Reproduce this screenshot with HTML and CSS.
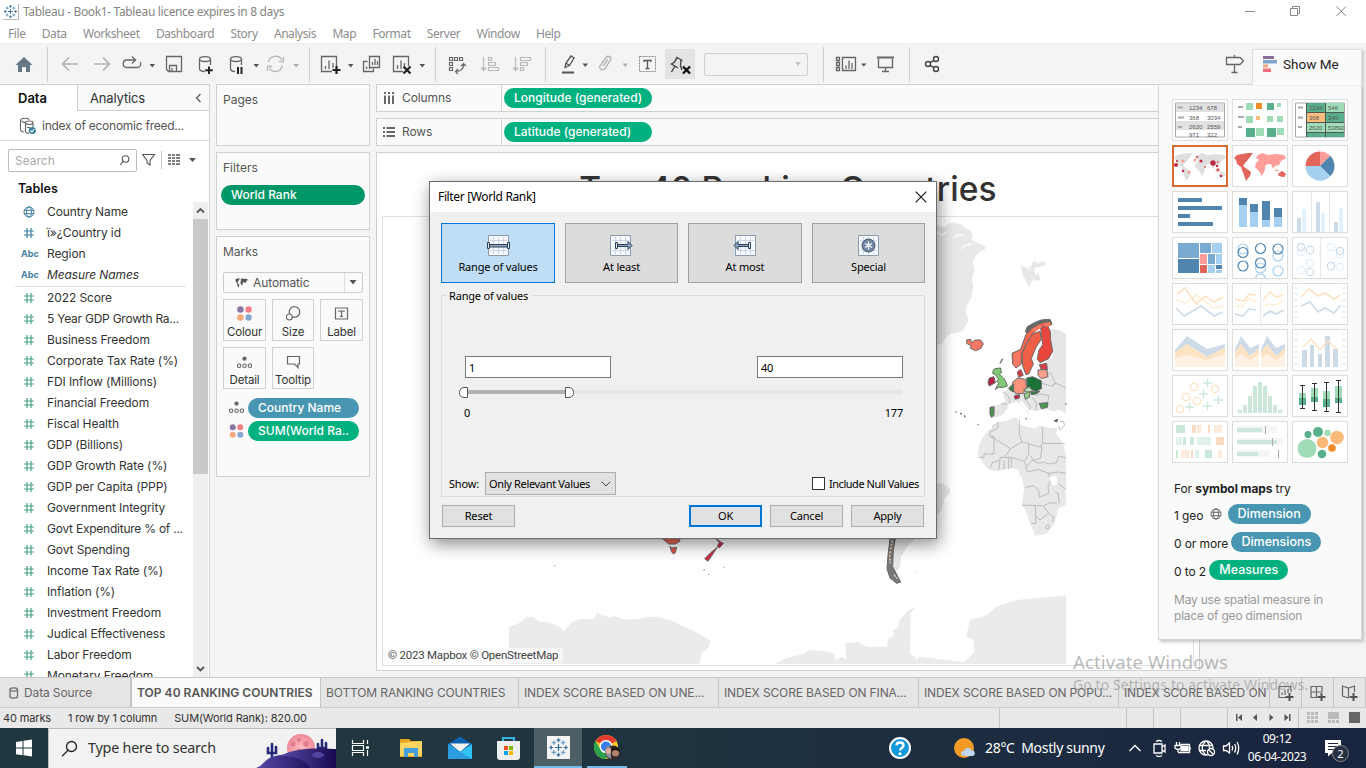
FILE: index.html
```html
<!DOCTYPE html>
<html lang="en">
<head>
<meta charset="utf-8">
<title>Tableau - Book1</title>
<link rel="stylesheet" href="styles.css">
</head>
<body>
<svg class="defs" width="0" height="0">
  <symbol id="hash" viewBox="0 0 12 12"><path d="M1 4H11M1 8H11M4 1V11M8 1V11" fill="none" stroke="currentColor" stroke-width="1.2"/></symbol>
  <symbol id="globe" viewBox="0 0 12 12"><g fill="none" stroke="currentColor"><circle cx="6" cy="6" r="5"/><ellipse cx="6" cy="6" rx="2.4" ry="5"/><path d="M1 4.3H11M1 7.7H11"/></g></symbol>
  <symbol id="dots" viewBox="0 0 14 14"><circle cx="3.2" cy="3.2" r="3" fill="#8a76a0"/><circle cx="10.8" cy="3.2" r="3" fill="#f77c89"/><circle cx="3.2" cy="10.8" r="3" fill="#f3a97c"/><circle cx="10.8" cy="10.8" r="3" fill="#86a8d2"/></symbol>
  <symbol id="detail" viewBox="0 0 14 12"><circle cx="7" cy="2.4" r="2" fill="#666"/><g fill="none" stroke="#666"><circle cx="2" cy="9" r="1.6"/><circle cx="7" cy="9" r="1.6"/><circle cx="12" cy="9" r="1.6"/></g></symbol>
  <symbol id="tableau" viewBox="0 0 24 24"><g fill="none" stroke-linecap="butt"><path d="M12 8V16M8 12H16M12 1.500V6M9.800 3.700H14.200M12 18V22.500M9.800 20.300H14.200M1.500 12H6M3.700 9.800V14.200M18 12H22.500M20.300 9.800V14.200" stroke="#336f9c" stroke-width="1.400"/><path d="M6.700 4V9M4.200 6.500H9.200M17.300 4V9M14.800 6.500H19.800M6.700 15V20M4.200 17.500H9.200M17.300 15V20M14.800 17.500H19.800" stroke="#6fa3c8" stroke-width="1.600"/></g></symbol>
  <symbol id="amer" viewBox="0 0 54 30"><path d="M1 6L4 3 9 2 15 1 20 1 17 5 14 9 12 11 10 14 14 17 18 20 17 24 13 29 11 23 9 18 8 15 4 12 3 8Z"/></symbol>
  <symbol id="rest" viewBox="0 0 54 30"><path d="M23 6L25 3 29 1 35 3 43 2 51 3 53 6 48 9 46 13 42 14 40 17 38 12 35 12 32 14 32 18 29 24 26 19 22 15 23 11 26 8Z"/><path d="M45 22L49 19 53 22 51 25 46 24ZM42 17L47 19 42 19Z"/></symbol>
</svg>

<header class="titlebar">
  <svg width="16" height="16" viewBox="0 0 24 24" class="applogo"><use href="#tableau"/></svg>
  <span class="apptitle">Tableau - Book1- Tableau licence expires in 8 days</span>
  <svg class="winbtns" width="126" height="22" viewBox="1240 0 126 22" fill="none" stroke="#888"><path d="M1245 10.500H1255M1290.500 7.500H1297.500V14.500H1290.500ZM1292.500 7V5.500H1299.500V12.500H1298M1336.500 5.500L1346 15M1346 5.500L1336.500 15"/></svg>
</header>
<nav class="menubar"><span>File</span><span>Data</span><span>Worksheet</span><span>Dashboard</span><span>Story</span><span>Analysis</span><span>Map</span><span>Format</span><span>Server</span><span>Window</span><span>Help</span></nav>

<div class="toolbar">
  <svg width="47" height="40" viewBox="0 44 47 40"><path d="M15.500 65L24 57 32.500 65H30V72H26V67H22V72H18V65Z" fill="#66778a"/></svg>
  <i class="sep"></i>
  <svg width="70" height="40" viewBox="48 44 70 40" fill="none" stroke="#b3b3b3" stroke-width="1.700"><path d="M78 64H63M69 57.500L62.500 64 69 70.500M94 64H109M103 57.500L109.500 64 103 70.500"/></svg>
  <svg width="191" height="40" viewBox="118 44 191 40" fill="none" stroke="#666" stroke-width="1.300"><path d="M135 60H127C122 60 122 67.500 127 67.500H137C141 67.500 141.500 63 140 62M132 56.500L135.500 60 132 63.500M166.500 56.500H181.500V71.500H168.500L166.500 69.500ZM169.500 71V65.500H176.500V71M172 71V68"/>
    <path d="M199.500 59V69C200 71 203 71.500 205 71.500M210.500 59V65M199.500 59C199.500 55.700 210.500 55.700 210.500 59S199.500 62.300 199.500 59ZM230.500 59V69C231 71 233 71.500 235 71.500M241.500 59V65M230.500 59C230.500 55.700 241.500 55.700 241.500 59S230.500 62.300 230.500 59Z"/>
    <path d="M209 66.500V74M205.200 70.200H212.800M238 67V74M241.500 67V74" stroke="#222" stroke-width="2"/>
    <path d="M149.500 64H155L152.250 67.500ZM253.500 64H259L256.250 67.500Z" fill="#555" stroke="none"/><path d="M293.500 64H299L296.250 67.500Z" fill="#aaa" stroke="none"/>
    <path d="M268.500 62C270 55 279 54.500 282 60M282.500 65.500C281 73 272 73 269.500 68M283.500 57V61.500H279M267.500 71V66.500H272" stroke="#b8b8b8"/></svg>
  <i class="sep"></i>
  <svg width="125" height="40" viewBox="310 44 125 40" fill="none" stroke="#666" stroke-width="1.300"><path d="M332 71.500H321.500V56.500H336.500V66M403 71.500H393.500V56.500H408.500V66M325.500 69V66M329 69V60.500M333 68V63M397.500 69V65M401 69V60.500M404.500 66V63M367.500 61.500H363.500V71.500H373.500V68.500M369.500 56.500H379.500V67.500H369.500ZM372.500 65V62M375 65V59M377.500 65V61M366.500 69V66.500M369.500 69V68"/><path d="M336.500 66V74M332.500 70H340.500M403.500 66.500L410.500 73.500M410.500 66.500L403.500 73.500" stroke="#222" stroke-width="2.200"/><path d="M348 64H353.500L350.750 67.500ZM419.500 64H425L422.250 67.500Z" fill="#555" stroke="none"/></svg>
  <i class="sep"></i>
  <svg width="109" height="40" viewBox="436 44 109 40" fill="none" stroke="#666" stroke-width="1.200"><path d="M449.500 57.500H452.500V60.500H449.500ZM454.500 57.500H457.500V60.500H454.500ZM459.500 57.500H462.500V60.500H459.500ZM449.500 62.500H452.500V65.500H449.500ZM449.500 67.500H452.500V70.500H449.500ZM463.500 64C464 69 460 71.500 456 71.500M461 66L463.500 63.500 466 66M458 69L455.500 71.500 458 74"/><path d="M483.500 57V70M481 67.500L483.500 70.500 486 67.500M488.500 57.500H491.500V60.500H488.500ZM488.500 62.500H495.500V65.500H488.500ZM488.500 67.500H498.500V70.500H488.500ZM515.500 57V70M513 67.500L515.500 70.500 518 67.500M520.500 57.500H530.500V60.500H520.500ZM520.500 62.500H527.500V65.500H520.500ZM520.500 67.500H523.500V70.500H520.500Z" stroke="#b8b8b8"/></svg>
  <i class="sep"></i>
  <svg width="119" height="40" viewBox="546 44 119 40" fill="none" stroke="#555" stroke-width="1.300"><path d="M565 67.500L566 63 571 56 574 58 569.500 65.500ZM566 63L569.500 65.500"/><path d="M562 72.500H574" stroke-width="2"/><path d="M602 63L606 57.500C608 55 612 57 610.500 60L605 68.500C603 71 598.500 69 600 66L605.500 58M603 66L608 59.500" stroke="#b0b0b0"/><path d="M582.500 63.500H588L585.250 67Z" fill="#555" stroke="none"/><path d="M622.500 63.500H628L625.250 67Z" fill="#b0b0b0" stroke="none"/><path d="M639.500 56.500H655.500V71.500H639.500Z" stroke="#888" stroke-width="1" stroke-dasharray="2 1"/><path d="M644 62V60.500H651V62M647.500 60.500V68M645.500 68.500H649.500"/></svg>
  <span class="pinned"><svg width="30" height="30" viewBox="665 49 30 30" fill="none" stroke="#444" stroke-width="1.400"><path d="M676 57L682.500 60.500M681 60L680.500 66L682 70M677 58L674 62.500 671.500 64 678 68M675 66L671.500 72"/><path d="M683 66.500L690 73.500M690 66.500L683 73.500" stroke="#111" stroke-width="2.400"/></svg></span>
  <span class="fitbox"><svg width="8" height="5" viewBox="0 0 8 5"><path d="M1 0H7L4 4Z" fill="#c4c4c4"/></svg></span>
  <i class="sep sep-fit"></i>
  <svg width="85" height="40" viewBox="824 44 85 40" fill="none" stroke="#666" stroke-width="1.300"><path d="M836.500 57.500H839.500V60.500H836.500ZM836.500 62.500H839.500V65.500H836.500ZM836.500 67.500H839.500V70.500H836.500ZM842.500 57.500H855.500V70.500H842.500ZM846 69V65.500M849 69V60.500M852 69V63"/><path d="M878.500 58.500V67.500H892.500V58.500M885.500 68V71.500M882 71.500H889"/><path d="M877 57.500H894" stroke-width="2"/><path d="M861 63.500H866.500L863.750 66.500Z" fill="#555" stroke="none"/></svg>
  <i class="sep"></i>
  <svg width="50" height="40" viewBox="910 44 50 40" fill="none" stroke="#444" stroke-width="1.400"><circle cx="928" cy="64" r="2.500"/><circle cx="936" cy="59" r="2.500"/><circle cx="936" cy="69" r="2.500"/><path d="M930.200 62.700L934 60.300M930.200 65.300L934 67.700"/></svg>
  <svg class="sign" width="32" height="40" viewBox="1220 44 32 40" fill="none" stroke="#666" stroke-width="1.300"><path d="M1226.500 57.500H1240L1243.500 61 1240 64.500H1226.500ZM1234.500 55V57M1234.500 65V72.500M1231.500 72.500H1237.500"/></svg>
</div>

<main class="workspace">
  <aside class="data">
    <div class="datatabs"><b class="tab-data">Data</b><span class="tab-an">Analytics<svg width="7" height="10" viewBox="0 0 7 10" fill="none" stroke="#555" stroke-width="1.200"><path d="M5.500 1L1.500 5 5.500 9"/></svg></span></div>
    <div class="source"><svg width="17" height="18" viewBox="19 116 17 18" fill="none" stroke="#666" stroke-width="1.100"><path d="M20.500 119.500C20.500 116.500 29 116.500 29 119M20.500 119.500V129C21 130.500 22 131 24 131M22 119.500C22 121 25 121.500 26 121.500M25.500 121.500C25.500 119.500 33 119.500 33 121.500V126M25.500 121.500V130.500C26 132 27 132.500 29 132.500M25.500 121.500C25.500 124 33 124 33 121.500M27 126.500H30"/><circle cx="32.300" cy="129.500" r="3.600" fill="#3b7f9e" stroke="none"/><path d="M30.500 129.500L32 131 34.300 128" stroke="#fff"/></svg><span>index of economic freed...</span></div>
    <div class="searchrow">
      <div class="search"><span>Search</span><svg width="11" height="11" viewBox="0 0 11 11" fill="none" stroke="#555" stroke-width="1.100"><circle cx="6.500" cy="4" r="3.300"/><path d="M4 6.500L1 10"/></svg></div>
      <svg width="55" height="22" viewBox="142 149 55 22" fill="none" stroke="#555" stroke-width="1.100"><path d="M142.500 154.500H154.500L150 160.500V165L147 163V160.500Z"/><path d="M161.500 151V169" stroke="#ccc"/><path d="M168 155H171M168 158H171M168 161H171M168 164H171M172 155H175M172 158H175M172 161H175M172 164H175M176 155H180M176 158H180M176 161H180M176 164H180" stroke-width="1.300"/><path d="M189 158H196L192.500 162Z" fill="#555" stroke="none"/></svg>
    </div>
    <div class="tables">Tables</div>
    <div class="fieldarea">
      <div class="fields">
        <div class="f blue"><svg><use href="#globe"/></svg>Country Name</div>
        <div class="f blue"><svg><use href="#hash"/></svg>ï»¿Country id</div>
        <div class="f blue"><em>Abc</em>Region</div>
        <div class="f blue"><em>Abc</em><i>Measure Names</i></div>
        <hr>
        <div class="f"><svg><use href="#hash"/></svg>2022 Score</div>
        <div class="f tight"><svg><use href="#hash"/></svg>5 Year GDP Growth Ra...</div>
        <div class="f"><svg><use href="#hash"/></svg>Business Freedom</div>
        <div class="f"><svg><use href="#hash"/></svg>Corporate Tax Rate (%)</div>
        <div class="f"><svg><use href="#hash"/></svg>FDI Inflow (Millions)</div>
        <div class="f"><svg><use href="#hash"/></svg>Financial Freedom</div>
        <div class="f"><svg><use href="#hash"/></svg>Fiscal Health</div>
        <div class="f"><svg><use href="#hash"/></svg>GDP (Billions)</div>
        <div class="f"><svg><use href="#hash"/></svg>GDP Growth Rate (%)</div>
        <div class="f"><svg><use href="#hash"/></svg>GDP per Capita (PPP)</div>
        <div class="f"><svg><use href="#hash"/></svg>Government Integrity</div>
        <div class="f tight"><svg><use href="#hash"/></svg>Govt Expenditure % of ...</div>
        <div class="f"><svg><use href="#hash"/></svg>Govt Spending</div>
        <div class="f"><svg><use href="#hash"/></svg>Income Tax Rate (%)</div>
        <div class="f"><svg><use href="#hash"/></svg>Inflation (%)</div>
        <div class="f"><svg><use href="#hash"/></svg>Investment Freedom</div>
        <div class="f"><svg><use href="#hash"/></svg>Judical Effectiveness</div>
        <div class="f"><svg><use href="#hash"/></svg>Labor Freedom</div>
        <div class="f"><svg><use href="#hash"/></svg>Monetary Freedom</div>
      </div>
      <div class="scroll"><svg width="15" height="17" viewBox="0 0 15 17" fill="none" stroke="#555" stroke-width="1.800"><path d="M4 10.500L7.500 7 11 10.500"/></svg><div class="thumb"></div><svg class="down" width="15" height="17" viewBox="0 0 15 17" fill="none" stroke="#555" stroke-width="1.800"><path d="M4 7L7.500 10.500 11 7"/></svg></div>
    </div>
  </aside>

  <section class="cards">
    <div class="card pages">Pages</div>
    <div class="card filters"><div>Filters</div><span class="pill rank">World Rank</span></div>
    <div class="card marks">
      <div class="cardname">Marks</div>
      <div class="marktype"><svg width="13" height="10" viewBox="0 0 54 30" preserveAspectRatio="none" fill="#555"><path d="M1 6L4 3 9 2 15 1 20 1 17 5 14 9 12 11 10 14 14 17 18 20 17 24 13 29 11 23 9 18 8 15 4 12 3 8ZM23 6L25 3 29 1 35 3 43 2 51 3 53 6 48 9 46 13 42 14 40 17 38 12 35 12 32 14 32 18 29 24 26 19 22 15 23 11 26 8Z"/></svg><span>Automatic</span><b><svg width="8" height="5" viewBox="0 0 8 5"><path d="M.500 0H7.500L4 4.500Z" fill="#555"/></svg></b></div>
      <div class="markgrid">
        <div><svg width="15" height="15" viewBox="0 0 14 14"><use href="#dots"/></svg>Colour</div>
        <div><svg width="15" height="15" viewBox="0 0 15 15" fill="none" stroke="#666" stroke-width="1.200"><circle cx="8.500" cy="6" r="5.300"/><circle cx="3.300" cy="11" r="3" fill="#fafafa"/></svg>Size</div>
        <div><svg width="15" height="15" viewBox="0 0 15 15" fill="none" stroke="#666" stroke-width="1.200"><path d="M1.500 2H13.500V13H1.500ZM5 6V5H10V6M7.500 5V10.500M6 10.500H9"/></svg>Label</div>
        <div><svg width="15" height="15" viewBox="0 -2 14 14"><use href="#detail" width="14" height="12"/></svg>Detail</div>
        <div><svg width="15" height="15" viewBox="0 0 15 15" fill="none" stroke="#666" stroke-width="1.200"><path d="M1.500 2.500H13.500V10H12V13.500L8.500 10H1.500Z"/></svg>Tooltip</div>
      </div>
      <div class="markpill"><svg width="15" height="14" viewBox="0 0 14 13"><use href="#detail" width="14" height="12"/></svg><span class="pill dim">Country Name</span></div>
      <div class="markpill"><svg width="15" height="14" viewBox="0 0 14 14"><use href="#dots"/></svg><span class="pill">SUM(World Ra..</span></div>
    </div>
  </section>

  <section class="viewcol">
    <div class="shelf"><div class="shelfname"><svg width="12" height="12" viewBox="0 0 12 12" stroke="#666" stroke-width="2"><path d="M2 0V2M2 3.500V12M6 0V2M6 3.500V12M10 0V2M10 3.500V12"/></svg>Columns</div><span class="pill">Longitude (generated)</span></div>
    <div class="shelf"><div class="shelfname"><svg width="12" height="12" viewBox="0 0 12 12" stroke="#666" stroke-width="2"><path d="M0 2H2M3.500 2H12M0 6H2M3.500 6H12M0 10H2M3.500 10H12"/></svg>Rows</div><span class="pill">Latitude (generated)</span></div>
    <div class="view">
      <h1>Top 40 Ranking Countries</h1>
      <div class="mapbox">
        <svg width="811" height="448" viewBox="383 217 811 448">
          <g transform="translate(930 210) scale(.33333)" stroke-linejoin="round">
            <path d="M0 50L24 46 40 52 60 38 92 42 108 56 122 62 128 78 126 90 166 110 164 120 150 126 136 140 128 158 134 178 126 204 130 232 124 262 112 284 106 304 116 330 98 364 62 372 44 386 36 402 22 404 0 430ZM272 166L286 172 300 180 298 166 306 170 306 158 314 152 324 160 340 152 350 164 330 172 318 170 312 182 318 196 324 188 332 210 318 212 312 206 302 218 298 234 288 212 278 192ZM20 820H36L60 836 58 852 44 864 38 892 30 908 20 914Z" fill="#e8e8e8"/>
            <path d="M70 84L84 74 100 76M96 118L104 106 126 102M20 66L34 76 48 66" stroke="#fff" stroke-width="4" fill="none"/>
            <path d="M366 356L386 360 408 372V610L388 600 366 604 352 598 330 600 318 604 298 598 300 612 292 608 276 588 262 576 250 578 234 584 232 596 220 612 206 620 188 622 178 610 182 590 202 584 214 582 226 572 216 548 234 540 246 520 340 510 338 488 344 460 370 440 364 410Z" fill="#e6e6e6"/>
            <path d="M206 636L230 632 254 622 264 626 266 644 290 650 314 656 330 646 360 654 380 654 382 672 400 704 408 736V884L386 894 374 938 352 970 316 978 302 944 286 900 276 884 282 836 276 804 266 790 268 780 246 774 228 778 196 784 172 776 154 752 144 736 146 706 162 676 186 652Z" fill="#e8e8e8"/>
            <path d="M204 640V654L180 666V678L242 716 222 744M180 680H192V732H162V742H146M242 716L276 696 268 672V630M276 696L334 712V702M338 652V700H408M296 700V732L284 754 244 742H210V752L188 756 180 774M210 752L206 780M222 752V778M236 744V778M244 742V774M284 754L288 770 304 754 332 744 336 712M300 736L314 756 330 760 340 756 358 762 380 758 386 738 408 744M288 770L292 786 324 778 356 790 362 812 354 830 356 850 328 862 326 840 312 828 286 832M356 790L384 786 408 790M362 812L376 814 408 838M374 846L384 850 388 880M276 886H316L318 940H304M316 886L340 888 360 878 380 880M342 890L356 910 330 930 318 918M356 910L370 920 368 936M346 950L356 944 358 954 350 958ZM230 584L214 580M186 652L206 636M288 570L302 590 298 602M318 558L330 552 356 556 354 574M330 530L336 520 366 528 376 518 362 490 344 490M366 528L378 520 408 534M388 636L400 634 404 646 390 660 386 648M306 560L320 580 318 600M222 544L236 560 240 580" fill="none" stroke="#b3b3b3" stroke-width="2.500"/>
            <path d="M272 574L286 594 300 606" fill="none" stroke="#fff" stroke-width="8"/>
            <path d="M378 666L396 690 408 700M360 804L376 800 380 820 370 824Z" fill="#fff" stroke="#fff" stroke-width="6"/>
            <g stroke="#686868" stroke-width="3">
              <path d="M110 390L122 388 124 398 136 390 152 390 160 402 152 416 136 422 120 414 124 408 110 400Z" fill="#f77862"/>
              <path d="M246 430L272 418 286 378 298 356 330 334 358 328 366 340 352 350 328 352 308 372 288 404 276 432 274 462 258 474 248 462Z" fill="#f0664f"/>
              <path d="M276 432L288 404 308 372 330 364 334 388 318 412 304 446 310 462 296 492 288 494 278 468Z" fill="#ef6048"/>
              <path d="M332 354L352 346 362 366 362 390 368 424 356 446 330 458 322 448 326 422 338 404Z" fill="#e9473e"/>
              <path d="M286 366L292 350 306 342 318 336 334 330 360 328 366 344 346 336 328 342 306 354 294 368Z" fill="#686868"/>
              <path d="M250 432L268 424 272 460 258 472 250 460ZM304 360L330 344 336 352 314 366ZM340 340L360 336 364 348 346 350Z" fill="#f77a63" stroke="none"/>
              <path d="M262 486L272 478 280 496 266 502Z" fill="#d33b43"/>
              <path d="M248 516L264 504 286 508 290 530 280 550 258 552 250 540Z" fill="#fc937c"/>
              <path d="M290 504L308 500 334 512 334 536 318 544 292 534Z" fill="#1b7138"/>
              <path d="M328 464L350 460 352 480 334 480Z" fill="#d83f48"/><path d="M324 480L350 478 354 500 334 506 324 496Z" fill="#fca08c"/>
              <path d="M280 540L298 530 308 542 296 548Z" fill="#b9dfae"/><path d="M282 552L300 544 298 562 286 568Z" fill="#8fd184"/><path d="M302 546L330 544 318 552 304 554Z" fill="#2c7e42"/>
              <path d="M328 580L354 578 352 592 334 596Z" fill="#4c9a50"/><path d="M180 592L192 590 192 616 184 622 180 612Z" fill="#499249"/>
              <path d="M252 558L268 554 268 564 256 568Z" fill="#c91f43"/><path d="M236 534L250 522 250 546 240 540Z" fill="#3c8544"/>
              <path d="M194 476L212 474 214 488 208 492 222 506 228 516 232 528 220 532 206 532 196 538 206 520 200 514 206 508 196 494 188 490 190 480Z" fill="#7fcb75"/><path d="M178 504L192 500 196 518 178 528 174 518Z" fill="#b82344"/>
              <path d="M372 632L384 628 380 636Z" fill="#686868"/>
            </g><path d="M210 460L218 446M76 606H80M90 610L96 612M102 616L106 622M142 644H146M288 624L290 628M408 580V584" stroke="#777" stroke-width="4"/>
          </g>
          <g transform="translate(440 530) scale(.33333)">
            <path d="M207 402V292L240 278 258 262 280 260 296 274 330 278 362 292 370 304 396 276 418 266 462 268 470 250 492 258 514 262 526 258 550 268 590 268 616 262 650 260 690 270 720 284 760 302 796 322 812 334 806 352 786 368 778 402ZM1004 402L1040 384 1090 372 1106 360 1144 362 1180 370 1188 390 1206 380 1220 388 1216 340 1252 336 1280 350 1340 350 1346 324 1362 318 1358 300 1374 292 1378 270 1394 254 1406 240 1428 230 1412 250 1410 370 1430 386 1424 400 1438 402Z" fill="#ebebeb"/>
            <path d="M1418 402L1440 380 1572 396 1604 366 1600 330 1578 320 1590 270 1640 256 1668 230 1730 210 1878 196V402Z" fill="#ebebeb"/>
            <path d="M1366 26H1428L1400 50 1384 80 1380 110 1364 130 1356 90ZM1420 126H1430V128H1420Z" fill="#e6e6e6"/>
            <path d="M1350 26H1366L1360 60 1358 110 1382 156 1370 160 1350 144 1341 116 1344 76Z" fill="#777" stroke="#666" stroke-width="3"/><path d="M1357 30L1350 74 1350 100M1362 134L1372 146" stroke="#dfc4b3" stroke-width="5" stroke-dasharray="8 3"/>
            <g stroke="#686868" stroke-width="3"><path d="M668 26H719V34L706 42H686Z" fill="#f26852"/><path d="M690 48L694 54 710 52 706 68 700 72 694 64Z" fill="#e45449"/><path d="M828 26L842 36 850 40 838 54 832 48 838 38Z" fill="#cf2847"/><path d="M832 52L824 64 804 94 794 86 812 68Z" fill="#cf2847"/></g>
            <path d="M790 120H795M804 134H808M850 113H853M342 108H346" stroke="#888" stroke-width="3"/>
          </g>
        </svg>
        <div class="credit">© 2023 Mapbox © OpenStreetMap</div>
      </div>
    </div>
  </section>
</main>

<aside class="showme">
  <div class="showtab"><svg width="14" height="16" viewBox="0 0 14 16"><path d="M0 0H11V3H0Z" fill="#87709c"/><path d="M0 4H14V7.500H0Z" fill="#7fa4cf"/><path d="M0 8.500H5V11.500H0Z" fill="#f5a97e"/><path d="M0 12.500H8V16H0Z" fill="#f76e7d"/></svg>Show Me</div>
  <div class="showbody">
    <div class="thumbs">
      <svg viewBox="0 0 56 42"><path d="M3.500 4H52.500V38H3.500Z" fill="#fff" stroke="#aaa"/><path d="M4 5H52V13H4ZM4 22H52V31H4Z" fill="#e1e1e1"/><path d="M6 8.500H11M6 18.500H12M6 28H10" stroke="#aaa" stroke-width="2"/><g class="tn"><text x="17" y="11">1234</text><text x="35" y="11">678</text><text x="17" y="20.500">368</text><text x="35" y="20.500">3034</text><text x="17" y="29.500">2620</text><text x="35" y="29.500">2559</text><text x="17" y="37.500">971</text><text x="35" y="37.500">322</text></g></svg>
      <svg viewBox="0 0 56 42"><path d="M6 8H11M6 18H12M6 28H10" stroke="#aaa" stroke-width="2"/><path d="M14 4H21V11H14ZM45 4H49V8H45ZM14 17H21V24H14ZM35 17H41V23H35ZM45 17H51V23H45ZM24 29H32V37H24ZM45 29H52V36H45Z" fill="#a0dcb8"/><path d="M35 4H42V11H35ZM14 29H23V38H14ZM35 29H44V38H35Z" fill="#58af8c"/><path d="M24 4H30V10H24Z" fill="#f28c28"/><path d="M24 17H28V21H24Z" fill="#fdbd7c"/></svg>
      <svg viewBox="0 0 56 42"><path d="M3.500 4H52.500V38H3.500Z" fill="#fff" stroke="#aaa"/><path d="M14 4H33V13H14ZM33 13H52V23H33ZM14 33H52V38H14Z" fill="#58af8c"/><path d="M33 4H52V13H33ZM14 23H52V33H14Z" fill="#a0dcb8"/><path d="M14 13H33V23H14Z" fill="#fdbd7c"/><path d="M14.500 4V38M33.500 4V38M14 13.500H52M14 23.500H52M14 33.500H52" stroke="#555"/><path d="M6 8.500H11M6 18.500H11M6 28H10" stroke="#aaa" stroke-width="2"/><g class="tn"><text x="17" y="11">1234</text><text x="36" y="11">546</text><text x="17" y="21">368</text><text x="36" y="21">340</text><text x="17" y="31">2620</text><text x="36" y="31">53890</text></g></svg>
      <svg class="picked" viewBox="0 0 56 42"><g fill="#dfdfdf"><use href="#amer" x="1" y="7" width="54" height="30"/><use href="#rest" x="1" y="7" width="54" height="30"/></g><g fill="#be2b41"><circle cx="4" cy="20" r="2"/><circle cx="5" cy="16" r="1"/><circle cx="29" cy="16" r="1.600"/><circle cx="41" cy="18" r="2.700"/><circle cx="45" cy="21" r="1.200"/><circle cx="49" cy="31" r="1.300"/><circle cx="11" cy="26" r="1.200"/></g><g fill="#e1655b"><circle cx="25" cy="12" r="1.300"/><circle cx="46" cy="25" r="1.800"/><circle cx="33" cy="22" r="1"/><circle cx="46" cy="17" r="1"/></g><g fill="#ff9d98"><circle cx="11" cy="16" r="1.600"/><circle cx="23" cy="15" r="1.500"/><circle cx="17" cy="27" r="1.500"/></g></svg>
      <svg viewBox="0 0 56 42"><use href="#amer" x="1" y="7" width="54" height="30" fill="#e1655b"/><use href="#rest" x="1" y="7" width="54" height="30" fill="#ff9d98"/><path d="M46 29L50 26 54 29 52 32 47 31Z" fill="#e1655b"/></svg>
      <svg viewBox="0 0 56 42"><path d="M28 21V6.500A14.500 14.500 0 0 0 13.500 21Z" fill="#e1655b"/><path d="M28 21L38.250 10.750A14.500 14.500 0 0 0 28 6.500Z" fill="#ff9d98"/><path d="M28 21L38.250 31.250A14.500 14.500 0 0 0 38.250 10.750Z" fill="#5085af"/><path d="M28 21H13.500A14.500 14.500 0 0 0 38.250 31.250Z" fill="#a6d0f0"/></svg>
      <svg viewBox="0 0 56 42"><path d="M6 7H30V11H6ZM6 15H50V19H6ZM6 23H18V27H6ZM6 31H41V35H6Z" fill="#5085af"/></svg>
      <svg viewBox="0 0 56 42"><path d="M7 7H15V36H7ZM18 13H26V36H18ZM30 10H38V36H30ZM42 17H50V36H42Z" fill="#a6d0f0"/><path d="M7 7H15V14H7ZM18 13H26V21H18ZM30 10H38V29H30ZM42 17H50V26H42Z" fill="#5085af"/></svg>
      <svg viewBox="0 0 56 42"><path d="M19.500 0V42M37.500 0V42" stroke="#e8e8e8"/><path d="M5 27H9V42H5ZM24 11H28V42H24ZM42 31H46V42H42Z" fill="#cddbe8"/><path d="M10 18H14V42H10ZM29 22H33V42H29ZM47 17H51V42H47Z" fill="#e3f1fc"/></svg>
      <svg viewBox="0 0 56 42"><path d="M6 6H27V21H6ZM28 6H39V16H28ZM36 17H43V27H36Z" fill="#7baad0"/><path d="M6 22H27V36H6ZM44 28H50V32H44Z" fill="#5085af"/><path d="M40 6H50V16H40ZM44 17H50V27H44ZM36 28H43V36H36ZM44 33H50V36H44Z" fill="#a6d0f0"/><path d="M28 17H35V27H28Z" fill="#ff9d98"/><path d="M28 28H35V36H28Z" fill="#e1655b"/></svg>
      <svg viewBox="0 0 56 42" fill="none" stroke="#5085af" stroke-width="1.200"><g stroke="#a6d0f0"><circle cx="11" cy="12" r="5"/><circle cx="46" cy="19" r="5"/><circle cx="46" cy="34" r="5"/><circle cx="28.500" cy="31" r="5"/><circle cx="28.500" cy="42" r="5"/></g><circle cx="11" cy="15.500" r="5"/><circle cx="11" cy="29" r="5"/><circle cx="28.500" cy="11.500" r="5"/><circle cx="28.500" cy="26" r="5"/><circle cx="46" cy="12" r="5"/></svg>
      <svg viewBox="0 0 56 42" fill="none" stroke="#e3f1fc" stroke-width="1.200"><path d="M28.500 0V42" stroke="#e8e8e8"/><circle cx="9" cy="15" r="3.700"/><circle cx="9" cy="33" r="3.700"/><circle cx="18" cy="26" r="3.700"/><circle cx="39" cy="10" r="3.700"/><circle cx="48" cy="30" r="3.700"/><circle cx="48" cy="17" r="3.700"/><g stroke="#cddbe8"><circle cx="9" cy="10" r="3.700"/><circle cx="18" cy="13" r="3.700"/><circle cx="18" cy="35" r="3.700"/><circle cx="39" cy="29" r="3.700"/><circle cx="48" cy="14" r="3.700"/></g></svg>
      <svg viewBox="0 0 56 42" fill="none" stroke-width="1.600"><path d="M4 17L14 20 24 12 34 19 42 25 52 23" stroke="#fff1d8"/><path d="M5 11L13 5 24 21 33 13 42 19 51 14" stroke="#fde2c3"/><path d="M4 25L12 33 29 23 42 33 51 29" stroke="#cddbe8"/></svg>
      <svg viewBox="0 0 56 42" fill="none" stroke-width="1.600"><path d="M28.500 0V42" stroke="#e8e8e8" stroke-width="1"/><path d="M4 23L11 23 17 15 24 19M31 23L37 21 43 22 52 18" stroke="#fff1d8"/><path d="M3 16L12 18 17 11 24 12M31 17L38 9 44 14 51 12" stroke="#fde2c3"/><path d="M3 31L11 33 17 26 24 27M31 33L38 28 44 31 52 27" stroke="#cddbe8"/></svg>
      <svg viewBox="0 0 56 42" fill="none" stroke-width="1.600"><path d="M4 4.500V38M52 4.500V38" stroke="#ddd" stroke-width="3" stroke-dasharray="1 5"/><path d="M9 14L17 6 26 13 33 10 42 16 48 12" stroke="#fde2c3"/><path d="M9 23L18 19 26 29 33 25 42 30 49 22" stroke="#cddbe8"/></svg>
      <svg viewBox="0 0 56 42"><path d="M3 21L15 7 35 20 53 15V19L35 28 15 15 3 24Z" fill="#cddbe8"/><path d="M3 23L15 15 35 28 53 18V38H3Z" fill="#fde2c3"/><path d="M3 29L15 26 35 31 53 25V38H3Z" fill="#fff1e4"/></svg>
      <svg viewBox="0 0 56 42"><path d="M3 20L9 7 18 19 27 15V20L17 27 9 15 3 24ZM29 20L35 7 44 19 53 15V20L44 27 35 15 29 24Z" fill="#cddbe8"/><path d="M3 23L9 15 18 27 27 19V38H3ZM29 23L35 15 44 27 53 19V38H29Z" fill="#fde2c3"/><path d="M3 29L9 25 18 31 27 25V38H3ZM29 29L35 25 44 31 53 25V38H29Z" fill="#fff1e4"/></svg>
      <svg viewBox="0 0 56 42"><path d="M4 4.500V38M52 4.500V38" stroke="#ddd" stroke-width="3" stroke-dasharray="1 5"/><path d="M10 21H15V38H10ZM18 16H22V38H18ZM26 25H30V38H26ZM33 7H38V38H33ZM41 20H46V38H41Z" fill="#cddbe8"/><path d="M11 18L19 10 28 21 36 12 46 21" fill="none" stroke="#fde2c3" stroke-width="1.400"/></svg>
      <svg viewBox="0 0 56 42" fill="none" stroke="#fde2c3" stroke-width="1.300"><circle cx="8" cy="34" r="3.700"/><circle cx="14" cy="22" r="3.700"/><circle cx="22" cy="12" r="3.700"/><circle cx="25" cy="26" r="3.700"/><circle cx="43" cy="14" r="3.700"/><path d="M13 32H22M17.500 27.500V36.500M27 19H36M31.500 14.500V23.500M31 8H40M35.500 3.500V12.500M31 31H40M35.500 26.500V35.500M42 25H51M46.500 20.500V29.500" stroke="#cde7da"/></svg>
      <svg viewBox="0 0 56 42"><path d="M6 35H10V38H6ZM11 30H15V38H11ZM16 21H20V38H16ZM21 11H25V38H21ZM26 7H30V38H26ZM31 11H35V38H31ZM36 21H40V38H36ZM41 30H45V38H41ZM46 35H50V38H46Z" fill="#cde7da"/></svg>
      <svg viewBox="0 0 56 42"><path d="M7 18H14V23H7ZM19 13H26V22H19ZM31 16H38V24H31ZM43 11H50V23H43Z" fill="#a0dcb8"/><path d="M7 23H14V30H7ZM19 22H26V27H19ZM31 24H38V32H31ZM43 23H50V28H43Z" fill="#58af8c"/><path d="M10.500 10V33M8 10.500H13M8 33.500H13M22.500 8V35M20 8.500H25M20 35.500H25M34.500 7V36M32 7.500H37M32 36.500H37M46.500 5V37M44 5.500H49M44 37.500H49" stroke="#333"/></svg>
      <svg viewBox="0 0 56 42"><path d="M4 4H13V12H4ZM11 16H14V24H11ZM18 16H22V24H18ZM4 29H6V37H4ZM33 29H40V37H33Z" fill="#cde7da"/><path d="M4 16H10V24H4ZM25 16H39V24H25ZM23 29H27V37H23Z" fill="#e0f2e9"/><path d="M20 4H24V12H20ZM36 4H38V12H36ZM44 16H52V24H44ZM19 29H21V37H19Z" fill="#fbdcc3"/><path d="M25 4H29V12H25ZM42 4H50V12H42ZM9 29H17V37H9ZM46 29H50V37H46Z" fill="#ffebdb"/></svg>
      <svg viewBox="0 0 56 42"><path d="M5 5H45V12H5ZM5 17H51V24H5ZM5 29H38V36H5Z" fill="#f5f5f5"/><path d="M5 7H30V11H5ZM5 19H45V23H5ZM5 31H26V35H5Z" fill="#cde7da"/><path d="M33.500 5V13M40.500 17V25M46.500 29V37" stroke="#aaa"/></svg>
      <svg viewBox="0 0 56 42"><g fill="#58af8c"><circle cx="16" cy="13.500" r="3.500"/><circle cx="26" cy="11" r="5"/><circle cx="30" cy="33" r="4.300"/></g><g fill="#a0dcb8"><circle cx="15" cy="27.500" r="9.500"/><circle cx="35.500" cy="12" r="3.200"/></g><g fill="#fdb97a"><circle cx="30.500" cy="21.500" r="5.800"/><circle cx="45" cy="16.500" r="6.800"/></g><circle cx="40" cy="27" r="3.800" fill="#f28c28"/></svg>
    </div>
    <p class="hint">For <b>symbol maps</b> try</p>
    <p class="hint need">1 geo <svg class="geo" width="12" height="12"><use href="#globe"/></svg><span class="pill dim">Dimension</span></p>
    <p class="hint need">0 or more <span class="pill dim">Dimensions</span></p>
    <p class="hint need">0 to 2 <span class="pill">Measures</span></p>
    <p class="note">May use spatial measure in<br>place of geo dimension</p>
  </div>
</aside>

<div class="sheets">
  <div class="sheet ds"><svg width="10" height="12" viewBox="0 0 10 12" fill="none" stroke="#666" stroke-width="1.200"><path d="M1 2.500C1 .300 8.500 .300 8.500 2.500S1 4.700 1 2.500V9.500C1 11.700 8.500 11.700 8.500 9.500V2.500"/></svg>Data Source</div>
  <div class="sheet on">TOP 40 RANKING COUNTRIES</div>
  <div class="sheet w2">BOTTOM RANKING COUNTRIES</div>
  <div class="sheet">INDEX SCORE BASED ON UNE...</div>
  <div class="sheet">INDEX SCORE BASED ON FINA...</div>
  <div class="sheet">INDEX SCORE BASED ON POPU...</div>
  <div class="sheet w3">INDEX SCORE BASED ON</div>
  <div class="newsheet"><svg width="17" height="17" viewBox="0 0 17 17" fill="none" stroke="#666" stroke-width="1.200"><path d="M9 13.500H2V2.500H14V8M5 11V8.500M8 11V6M11 9V5"/><path d="M12.500 9V17M8.500 13H16.500" stroke="#555" stroke-width="2"/></svg></div>
  <div class="newsheet"><svg width="17" height="17" viewBox="0 0 17 17" fill="none" stroke="#666" stroke-width="1.200"><path d="M8 13.500H2V2.500H13V8M2 8H9M7.500 2.500V13.500M7.500 8H13"/><path d="M12.500 9V17M8.500 13H16.500" stroke="#555" stroke-width="2"/></svg></div>
  <div class="newsheet"><svg width="17" height="17" viewBox="0 0 17 17" fill="none" stroke="#666" stroke-width="1.200"><path d="M7.500 14L1.500 12V2L7.500 4 13.500 2V8M7.500 4V14"/><path d="M12.500 9V17M8.500 13H16.500" stroke="#555" stroke-width="2"/></svg></div>
</div>
<div class="status"><span>40 marks</span><span>1 row by 1 column</span><span>SUM(World Rank): 820.00</span>
  <svg width="367" height="20" viewBox="999 708 367 20"><path d="M999.500 708V728M1126.500 708V728M1153.500 708V728M1180.500 708V728M1227.500 708V728M1298.500 708V728" stroke="#c6c6c6"/><path d="M1236 714H1237.500V721H1236ZM1242 714V721L1238 717.500ZM1257 714V721L1253 717.500ZM1269.500 714V721L1273.500 717.500ZM1284.500 714V721L1288.500 717.500ZM1289 714H1290.500V721H1289Z" fill="#555"/><path d="M1307 712H1310V715H1307ZM1311 712H1314V715H1311ZM1315 712H1318V715H1315ZM1307 716H1310V719H1307ZM1311 716H1314V719H1311ZM1315 716H1318V719H1315ZM1307 720H1310V723H1307ZM1311 720H1314V723H1311ZM1315 720H1318V723H1315ZM1328 712H1339V719H1328ZM1328 720H1331V723H1328ZM1332 720H1335V723H1332ZM1336 720H1339V723H1336Z" fill="#bbb"/><path d="M1349 712H1360V723H1349Z" fill="#666"/></svg>
</div>

<footer class="taskbar">
  <svg width="48" height="40" viewBox="0 0 48 40"><path d="M16 14L22.500 13V19.500H16ZM23.500 12.800L32 11.500V19.500H23.500ZM16 20.500H22.500V27.200L16 26.200ZM23.500 20.500H32V28.500L23.500 27.300Z" fill="#fff"/></svg>
  <div class="winsearch"><svg width="17" height="17" viewBox="0 0 17 17" fill="none" stroke="#222" stroke-width="1.300"><circle cx="10.500" cy="6.500" r="5"/><path d="M7 10.200L1 16.200"/></svg><span>Type here to search</span>
    <svg class="art" width="80" height="39" viewBox="256 729 80 39"><defs><radialGradient id="moon"><stop offset="0" stop-color="#ffbdc2"/><stop offset="1" stop-color="#ef8b9b"/></radialGradient><linearGradient id="hill" x2="1"><stop offset="0" stop-color="#584aa8"/><stop offset="1" stop-color="#170850"/></linearGradient></defs><circle cx="301" cy="748" r="14" fill="url(#moon)"/><g fill="#e27b8d"><circle cx="293" cy="744" r="2.500"/><circle cx="299" cy="740" r="2"/><circle cx="306" cy="744" r="2.800"/><circle cx="299" cy="751" r="2.500"/><circle cx="309" cy="751" r="2"/></g><path d="M272 760V744M268 748V753H276V747M322 755V740M318 744V748H326V743" fill="none" stroke="#272a78" stroke-width="2.600" stroke-linecap="round"/><path d="M286 768C300 752 320 749 336 750V768Z" fill="#21105f"/><path d="M256 768C266 764 264 757 280 755 302 752 312 760 320 768Z" fill="url(#hill)"/><path d="M280 756C295 748 315 748 336 749V768H310C306 760 295 756 280 756Z" fill="url(#hill)"/><ellipse cx="318" cy="755" rx="6" ry="3" fill="#5144a0"/></svg></div>
  <svg width="198" height="40" viewBox="336 728 198 40"><g fill="none" stroke="#fff" stroke-width="1.200"><path d="M352.500 740V743.500H363.500V740M352.500 756V752.500H363.500V756M352.500 745.500H363.500V750.500H352.500ZM367.500 740V744M367.500 750V756"/><path d="M366 747.500H369" stroke-width="2.500"/></g>
    <path d="M400 739H409L411 741H422V757H400Z" fill="#e5a51c"/><path d="M400 743L422 741V756H400Z" fill="#fcd462"/><path d="M404 757V748H418V757H414V753H408V757Z" fill="#459fdc"/>
    <path d="M448 744L460 736.500 472 744V759H448Z" fill="#0e63b0"/><path d="M450 743.500H470L460 752Z" fill="#f2f2f2"/><path d="M448 744L460 752 472 744V759H448Z" fill="#30c3f2"/><path d="M448 744L472 759H448Z" fill="#2a9de3"/>
    <path d="M503 741V738H514V741" fill="none" stroke="#36b2e5" stroke-width="2.200"/><path d="M497 741H520V757Q520 760 517 760H500Q497 760 497 757Z" fill="#eee"/><path d="M504 746H508V750H504Z" fill="#f05022"/><path d="M509 746H513V750H509Z" fill="#7fba00"/><path d="M504 751H508V755H504Z" fill="#00a4ef"/><path d="M509 751H513V755H509Z" fill="#ffb900"/></svg>
  <div class="app active"><svg width="23" height="23" viewBox="-1 -1 26 26" class="tbapp"><use href="#tableau" width="24" height="24"/></svg></div>
  <div class="app chrome"><svg width="30" height="30" viewBox="593 733 30 30"><circle cx="607" cy="748" r="12" fill="#ffca28"/><path d="M607 748L596.600 742A12 12 0 0 1 617.400 742Z" fill="#e33b2e"/><path d="M596.600 742A12 12 0 0 0 607 760L610 752 602 751Z" fill="#2ba24c"/><circle cx="607" cy="747.500" r="5.800" fill="#3a7cec" stroke="#fff" stroke-width="1.500"/><circle cx="614" cy="754" r="7.500" fill="#312a2b"/><path d="M606 750Q610 743 612 750V760Q606 758 606 750Z" fill="#8c8a9b"/><circle cx="609.500" cy="752" r="2.700" fill="#dfb19c"/><circle cx="616.500" cy="754" r="3.500" fill="#b4826a"/><path d="M612 751Q616 746 621 751V753Q616 749 612 753Z" fill="#171314"/></svg></div>
  <svg class="help" width="24" height="24" viewBox="0 0 24 24"><circle cx="12" cy="12" r="10" fill="#1397dc" stroke="#fff" stroke-width="2"/><path d="M8.500 9.500C8.500 5.500 15.500 5.500 15.500 9.500C15.500 12 12 12 12 14.500" fill="none" stroke="#fff" stroke-width="2.400"/><circle cx="12" cy="17.700" r="1.500" fill="#fff"/></svg>
  <svg class="sun" width="24" height="24" viewBox="0 0 24 24"><circle cx="11" cy="12" r="10" fill="#f29a25"/><path d="M11 20C7 20 7 15 11 15 12 11 17 11 18 14 23 14 23 20 19 20Z" fill="#bfd6f7"/></svg>
  <span class="weather">28°C&nbsp; Mostly sunny</span>
  <svg class="tray" width="120" height="40" viewBox="1125 728 120 40" fill="none" stroke="#fff" stroke-width="1.300"><path d="M1129.500 751L1135 745.500 1140.500 751M1154 744H1162V753H1154ZM1162 747L1165 745V752L1162 750M1156 741.500Q1159 739.500 1162 741.500M1156 755.500Q1159 757.500 1162 755.500"/><path d="M1180.500 744.500H1189.500V752.500H1178"/><path d="M1182 746.500H1188V750.500H1181Z" fill="#fff"/><path d="M1190 747V750M1176.500 742V745M1179.500 742V745M1175 745.500H1181V748Q1178 751 1175 748ZM1178 750V752"/><circle cx="1206" cy="748" r="7"/><path d="M1199 745.500H1213M1199 750.500H1206M1206 741C1201 745 1201 751 1206 755M1206 741C1210 744 1210 747 1209 748"/><circle cx="1211" cy="752" r="3.500" fill="#1b2b3b"/><path d="M1208.500 749.500L1213.500 754.500M1223.500 746H1226L1229.500 743V753L1226 750.500H1223.500ZM1232 746Q1233.500 748 1232 750.500M1234.500 744Q1237 748 1234.500 752.500M1237 742Q1240.500 748 1237 754.500"/></svg>
  <div class="clock"><span>09:12</span><span>06-04-2023</span></div>
  <div class="notif"><svg width="18" height="18" viewBox="0 0 18 18"><path d="M1 1H17V14H8L4 17.500V14H1Z" fill="#fff"/><path d="M4 4.500H14M4 7.500H14M4 10.500H11" stroke="#1b2540" stroke-width="1.200"/></svg><b>2</b></div>
</footer>

<div class="watermark"><p class="wm1">Activate Windows</p><p class="wm2">Go to Settings to activate Windows.</p></div>

<div class="dialog">
  <div class="dlgtitle"><span>Filter [World Rank]</span><svg width="12" height="12" viewBox="0 0 12 12" stroke="#111" stroke-width="1.100"><path d="M.700 .700L11.300 11.300M11.300 .700L.700 11.300"/></svg></div>
  <div class="dlgbody">
    <div class="kinds">
      <div class="kind sel"><svg width="26" height="22" viewBox="0 0 26 22"><path class="gb" d="M3.500 .500H23.500V20.500H3.500Z"/><path class="gl" d="M8.500 2V19M13.500 2V19M18.500 2V19M5 5.500H22M5 15.500H22"/><path d="M3 9.500H23V12H3Z" fill="#8fa7c2" stroke="#2c4158"/><path d="M2.500 7.500H4.500V13.500H2.500ZM22.500 7.500H24.500V13.500H22.500Z" fill="#dce6f2" stroke="#2c4158"/></svg>Range of values</div>
      <div class="kind"><svg width="26" height="22" viewBox="0 0 26 22"><path class="gb" d="M1.500 .500H21.500V20.500H1.500Z"/><path class="gl" d="M6.500 2V19M11.500 2V19M16.500 2V19M3 5.500H20M3 15.500H20"/><path d="M8 9.500H19V6.500L23 10.500 19 14.500V11.500H8Z" fill="#8fa7c2" stroke="#2c4158"/><path d="M6.500 7.500H8.500V13.500H6.500Z" fill="#dce6f2" stroke="#2c4158"/></svg>At least</div>
      <div class="kind"><svg width="26" height="22" viewBox="0 0 26 22"><path class="gb" d="M3.500 .500H23.500V20.500H3.500Z"/><path class="gl" d="M8.500 2V19M13.500 2V19M18.500 2V19M5 5.500H22M5 15.500H22"/><path d="M17 9.500H6V6.500L2 10.500 6 14.500V11.500H17Z" fill="#8fa7c2" stroke="#2c4158"/><path d="M16.500 7.500H18.500V13.500H16.500Z" fill="#dce6f2" stroke="#2c4158"/></svg>At most</div>
      <div class="kind"><svg width="26" height="22" viewBox="0 0 26 22"><path class="gb" d="M2.500 .500H22.500V20.500H2.500Z"/><path class="gl" d="M7.500 2V19M12.500 2V19M17.500 2V19M4 5.500H21M4 15.500H21"/><circle cx="12.500" cy="10.500" r="6.500" fill="#7189a5" stroke="#44566c"/><path d="M12.500 6.500V14.500M9 8.500L16 12.500M16 8.500L9 12.500" stroke="#fff" stroke-width="1.200"/></svg>Special</div>
    </div>
    <div class="group"><span class="legend">Range of values</span>
      <div class="inputs"><div>1</div><div>40</div></div>
      <svg class="slider" width="450" height="13" viewBox="459 386 450 13"><path d="M465 390H902V394H465Z" fill="#e5e5e5"/><path d="M467 390H566V394H467Z" fill="#b2b2b2"/><path d="M467.500 387.500V397.500H464Q459.500 397 459.500 392.500T464 387.500ZM565.500 387.500V397.500H569Q573.500 397 573.500 392.500T569 387.500Z" fill="#fff" stroke="#555"/></svg>
      <div class="limits"><span>0</span><span>177</span></div>
      <div class="showrow"><span>Show:</span><div class="select"><span>Only Relevant Values</span><svg width="10" height="6" viewBox="0 0 10 6" fill="none" stroke="#444"><path d="M.700 .700L5 5 9.300 .700"/></svg></div><i class="check"></i><span class="nulls">Include Null Values</span></div>
    </div>
    <div class="actions"><span class="btn reset">Reset</span><span class="btn ok">OK</span><span class="btn">Cancel</span><span class="btn">Apply</span></div>
  </div>
</div>
</body>
</html>
```

FILE: styles.css
```css
*{box-sizing:border-box}
html,body{margin:0;width:1366px;height:768px;overflow:hidden}
body{position:relative;background:#f4f4f4;font:12px/16px "Inter","Open Sans",sans-serif;color:#333;white-space:nowrap}
svg{display:block;flex:none}
p{margin:0}
.defs{position:absolute}
.titlebar{display:flex;align-items:center;height:23px;background:#fff;padding-left:3px;font-family:"Noto Sans",sans-serif;color:#858585}
.applogo{border-right:1px solid #bbb;border-bottom:1px solid #bbb}
.apptitle{margin-left:4px;letter-spacing:-.35px}
.winbtns{margin-left:auto}
.menubar{display:flex;gap:16.300px;height:20px;padding-left:8px;background:#fff;font:12px/21px "Noto Sans",sans-serif;color:#8d8d8d;letter-spacing:-.43px}
.toolbar{display:flex;align-items:center;height:41px;border-top:1px solid #ededed;background:#f4f4f4}
.sep{width:1px;height:35px;background:#cfcfcf;flex:none}
.pinned{background:#e3e3e3}
.fitbox{display:flex;align-items:center;justify-content:flex-end;width:104px;height:23px;margin-left:9px;padding-right:5px;border:1px solid #d0d0d0;border-radius:2px}
.sep-fit{margin-left:15px}
.sign{margin-left:260px}
.workspace{display:flex;height:593px;overflow:hidden}

.data{display:flex;flex-direction:column;width:210px;flex:none;border-right:1px solid #d0d0d0;border-top:1px solid #d0d0d0;background:#fff}
.datatabs{display:flex;height:26px;line-height:26px;font-size:13px;color:#333}
.tab-data{width:77px;padding-left:18px;color:#111;font-weight:600}
.tab-an{display:flex;align-items:center;flex:1;padding:0 7px 0 12px;border-left:1px solid #cfcfcf;border-bottom:1px solid #cfcfcf;background:#f9f9f9;letter-spacing:-.15px}
.tab-an svg{margin-left:auto}
.source{display:flex;align-items:center;gap:6px;height:30px;padding-left:19px;border-bottom:1px solid #ddd;color:#555;letter-spacing:-.25px}
.searchrow{display:flex;gap:5px;padding:8px 0 0 8px}
.search{display:flex;justify-content:space-between;align-items:center;width:129px;height:23px;padding:0 6px;border:1px solid #bbb;border-radius:2px;color:#aaa}
.tables{padding:8px 0 0 18px;line-height:18px;height:29px;font-weight:600;font-size:12.500px;color:#111}
.fieldarea{display:flex;flex:1;min-height:0;overflow:hidden}
.fields{width:193px;height:476px;overflow:hidden}
.f{display:flex;align-items:center;height:21px;padding-left:23px;color:#333;line-height:21px;letter-spacing:-.1px}
.f.tight{letter-spacing:-.24px}
.f svg{width:12px;height:12px;margin-right:12px;color:#46a384}
.f.blue svg,.f em{color:#3d7f9f}
.f em{width:17px;margin:0 9px 0 -2px;font:bold 9px/21px "Inter",sans-serif;letter-spacing:0}
.fields hr{margin:1px 7px 0 15px;border:0;border-top:1px solid #ddd}
.scroll{display:flex;flex-direction:column;width:15px;background:#efefef;margin-top:1px}
.thumb{height:255px;background:#c9c9c9}
.down{margin-top:auto}

.cards{width:154px;margin-left:6px;flex:none;color:#555}
.card{border:1px solid #d0d0d0;background:#fafafa;padding:7px 6px;margin-bottom:6px}
.pages{height:62px}
.filters{height:78px;padding-right:4px}
.pill{display:block;height:20px;padding:0 10px;border-radius:10px;background:#00b180;color:#fff;line-height:20px;font-weight:500}
.pill.rank{margin:9px 0 0 -2px;background:#009768}
.pill.dim{background:#4996b2}
.marks{height:241px}
.marktype{display:flex;align-items:center;height:21px;margin-top:12px;padding-left:11px;border:1px solid #ccc;border-radius:2px}
.marktype span{margin-left:5px;letter-spacing:-.1px}
.marktype b{display:flex;align-items:center;width:18px;height:19px;margin-left:auto;padding-left:4px;border-left:1px solid #ddd}
.markgrid{display:grid;grid-template-columns:43px 42px 43px;gap:6px;margin-top:6px;color:#333}
.markgrid div{display:flex;flex-direction:column;align-items:center;height:42px;padding-top:6px;border:1px solid #d0d0d0;line-height:22px;font-size:11.500px;letter-spacing:-.15px}
.markpill{display:flex;align-items:center;gap:4px;margin:9px 0 -6px 6px}
.markpill .pill{width:111px}

.viewcol{width:983px;margin-left:6px;flex:none}
.shelf{display:flex;align-items:center;height:28px;margin-bottom:6px;border:1px solid #d0d0d0;background:#fafafa}
.shelfname{display:flex;align-items:center;gap:7px;width:125px;height:26px;padding-left:6px;margin-right:2px;border-right:1px solid #d0d0d0;color:#555;letter-spacing:-.1px}
.shelf .pill{width:148px}
.view{width:824px;height:519px;border:1px solid #d0d0d0;background:#fff;padding:0 5px}
h1{margin:0;height:63px;text-align:center;font:500 33.500px/72px "Inter",sans-serif;letter-spacing:.08px;color:#333;overflow:hidden}
.mapbox{position:relative;height:450px;border:1px solid #e0e0e0}
.mapbox>svg{width:811px;height:448px}
.credit{position:absolute;left:0;bottom:2px;padding:0 5px;background:#fafafacc;font:11.500px/15px Roboto,sans-serif;color:#444;letter-spacing:-.22px}

.showme{position:absolute;left:1158px;top:49px;width:204px;height:591px}
.showtab{position:relative;z-index:1;display:flex;align-items:center;gap:6px;width:110px;height:36px;margin-left:94px;padding:0 0 8px 10px;border:1px solid #ddd;border-bottom:0;background:#fafafa;font:13.500px/20px Roboto,sans-serif;color:#222;box-shadow:3px 0 3px -1px #9997}
.showbody{height:556px;margin-top:-1px;padding:14px 13px;border:1px solid #d6d6d6;background:#fafafa;box-shadow:2px 2px 3px #8887}
.thumbs{display:grid;grid-template-columns:repeat(3,56px);gap:4px;margin-bottom:18px}
.thumbs svg{width:56px;height:42px;background:#fff;outline:1px solid #ddd;outline-offset:-1px}
.thumbs .picked{outline:2px solid #d96b35;outline-offset:-2px}
.tn{font:6px "Liberation Sans",sans-serif;fill:#555}
.hint{display:flex;align-items:center;height:16px;margin-left:2px;white-space:pre;color:#222;letter-spacing:-.1px}
.hint.need{height:20px;margin-top:8px;padding-top:2px}
.need .pill{margin-top:-4px;font-size:12.500px;letter-spacing:0}
.geo{margin:-4px 6px 0 3px;color:#666}
.note{margin:11px 0 0 2px;color:#999;letter-spacing:-.2px}

.sheets{display:flex;height:30px;border-top:1px solid #c9c9c9;background:#e5e5e5;color:#666;letter-spacing:-.13px}
.sheet{width:200px;flex:none;padding-left:5px;border-right:1px solid #c4c4c4;line-height:29px;overflow:hidden}
.ds{display:flex;align-items:center;gap:5px;width:132px;padding-left:9px;border-right:2px solid #c4c4c4}
.on{width:189px;background:#fafafa;font-weight:600;color:#555;letter-spacing:.02px}
.w2{width:198px}.w3{width:151px}
.newsheet{display:flex;align-items:center;justify-content:center;width:32px;border-right:1px solid #c4c4c4}
.status{display:flex;height:21px;padding-left:3px;border-top:1px solid #ccc;background:#e9e9e9;color:#333;font-size:11px;line-height:21px;letter-spacing:-.14px}
.status span+span{margin-left:17px}
.status svg{margin-left:auto}
.taskbar{display:flex;align-items:center;height:40px;background:linear-gradient(90deg,#203840,#21363f 35%,#1e3040 60%,#192440);font-family:"Noto Sans",sans-serif;color:#fff}
.winsearch{display:flex;align-items:center;width:288px;height:40px;padding-left:12px;border:1px solid #bbb;border-width:1px 0 0 1px;background:#f2f2f2;color:#333;font-size:14.300px}
.winsearch span{margin:-2px 0 0 10px;letter-spacing:-.2px}
.art{margin-left:auto}
.app{display:flex;align-items:center;justify-content:center;width:48px;height:40px;border-bottom:2px solid #76b9ed}
.active{background:#4c5e66}
.tbapp{background:#f4f4f4}
.chrome{width:40px;margin-left:5px}
.help{margin-left:261px}
.sun{margin-left:41px}
.weather{width:120px;margin-left:8px;font-size:14px;letter-spacing:-.32px}
.tray{margin-left:20px}
.clock{display:flex;flex-direction:column;align-items:center;width:64px;font-size:12px;line-height:18px;letter-spacing:-.4px}
.notif{position:relative;margin-left:15px}
.notif b{position:absolute;left:8px;top:6px;width:17px;height:17px;border:1px solid #888;border-radius:50%;background:#263043;font:11px/15px "Noto Sans",sans-serif;text-align:center}
.watermark{position:absolute;left:1073px;top:650px;font-family:"Noto Sans",sans-serif;color:#8d8d8d99}
.wm1{font-size:18.500px;line-height:24px;letter-spacing:.13px}
.wm2{font-size:14px;line-height:21px;letter-spacing:.1px}

.dialog{position:absolute;left:429px;top:181px;width:508px;height:358px;border:1px solid #6b6b6b;background:#f0f0f0;box-shadow:2px 5px 16px #0007;font:11px/14px "Noto Sans",sans-serif;letter-spacing:-.18px;color:#000}
.dlgtitle{display:flex;align-items:center;justify-content:space-between;height:30px;padding:0 9px 1px 8px;background:#fff;font-size:12px;letter-spacing:-.35px}
.dlgbody{padding:11px}
.kinds{display:grid;grid-template-columns:114px 113px 114px 113px;column-gap:10px}
.kind{display:flex;flex-direction:column;align-items:center;height:60px;padding-top:11px;border:1px solid #a0a0a0;background:#dcdcdc;line-height:20px}
.sel{border-color:#0078d7;background:#bfddf5}
.gb{fill:#f6f9fd;stroke:#8b9cae}
.gl{fill:none;stroke:#ccd6e2}
.group{position:relative;height:202px;margin-top:12px;padding:60px 21px 0 23px;border:1px solid #dcdcdc}
.legend{position:absolute;left:5px;top:-7px;padding:0 3px 0 2px;background:#f0f0f0}
.inputs{display:flex;justify-content:space-between}
.inputs div{width:146px;height:22px;padding:1px 3px 0;line-height:19px;border:1px solid #7a7a7a;background:#fff}
.slider{margin:8px 0 0 -6px}
.limits{display:flex;justify-content:space-between;margin:7px 0 0 -1px}
.showrow{display:flex;align-items:center;margin:52px -16px 0 -16px}
.select{display:flex;align-items:center;justify-content:space-between;width:131px;height:23px;margin-left:6px;padding:0 4px 0 3px;border:1px solid #adadad;background:#e1e1e1;letter-spacing:-.33px}
.nulls{width:90px;letter-spacing:-.47px}
.check{width:13px;height:13px;margin:0 4px 0 auto;border:1px solid #333;background:#fff}
.actions{display:flex;gap:8px;margin-top:8px}
.btn{width:73px;height:22px;border:1px solid #adadad;background:#e1e1e1;text-align:center;line-height:20px}
.reset{margin:0 auto 0 1px}
.btn.ok{border:2px solid #0078d7;line-height:18px}
.actions .btn:last-child{margin-right:1px}
```
